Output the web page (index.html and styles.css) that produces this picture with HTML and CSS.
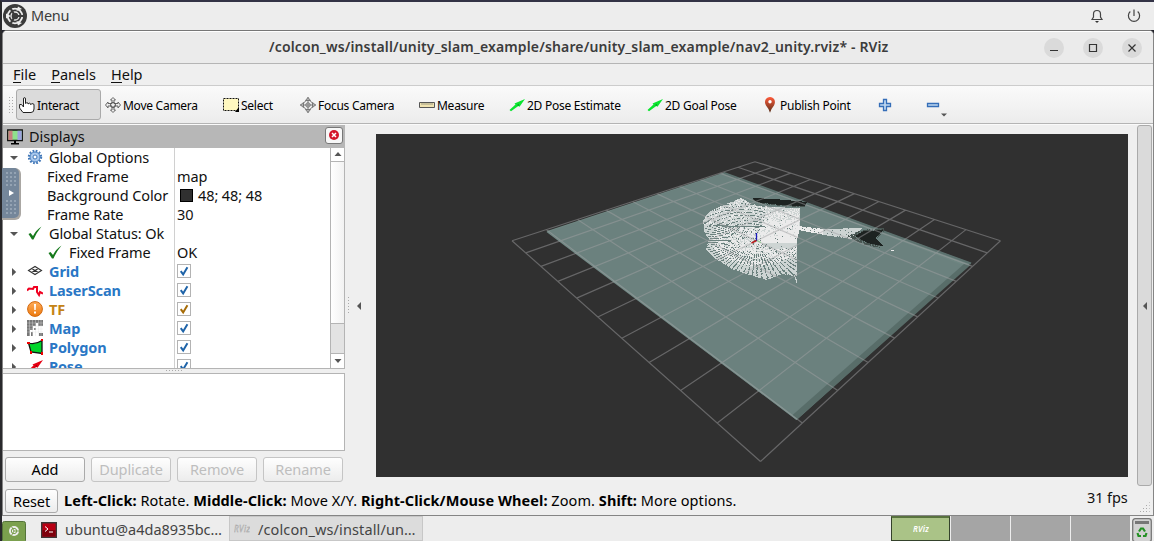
FILE: index.html
```html
<!DOCTYPE html>
<html lang="en">
<head>
<meta charset="utf-8">
<title>RViz</title>
<link rel="stylesheet" href="styles.css">
</head>
<body>
<svg class="defs" width="0" height="0">
  <defs>
    <symbol id="tick" viewBox="0 0 14 14"><path d="M3.2 7.2 6 11 11 2.5" fill="none" stroke="currentColor" stroke-width="2.300"/></symbol>
    <symbol id="ok" viewBox="0 0 16 16"><path d="M1.500 9 3.500 8 6 11 Q9 5 14.500 1.500 Q9.500 7.500 6.500 14.500 L5 14.500Z" fill="#177a1d"/></symbol>
    <symbol id="right" viewBox="0 0 8 8"><path d="M2 0 6.200 4 2 8Z" fill="#555"/></symbol>
    <symbol id="down" viewBox="0 0 8 8"><path d="M0 2H8L4 6Z" fill="#555"/></symbol>
    <symbol id="pose" viewBox="0 0 16 16"><path d="M.5 13 6.500 7.500 5.500 6.500 16 2 10.500 9.800 9.300 9 2 14.300Z" fill="currentColor"/><path d="M8 8 10 7 9.500 9Z" fill="#0006"/></symbol>
    <linearGradient id="pin" x2="0" y2="1"><stop offset="0" stop-color="#ff5a3a"/><stop offset="1" stop-color="#56301a"/></linearGradient>
    <linearGradient id="orange" x2="0" y2="1"><stop offset="0" stop-color="#ffad5a"/><stop offset="1" stop-color="#ed7a0f"/></linearGradient>
  </defs>
</svg>
<div class="desktop">
  <header class="panel">
    <svg class="logo" viewBox="0 0 24 24"><circle cx="12" cy="12" r="12" fill="#3b3b3b"/><circle cx="12" cy="12" r="7.300" fill="none" stroke="#eee" stroke-width="1.800"/><circle cx="12" cy="12" r="4" fill="none" stroke="#eee" stroke-width="1.300"/><path d="M12 12 21 12M12 12 7.500 4.200M12 12 7.500 19.800" stroke="#3b3b3b" stroke-width="2.200"/><path d="M3 9.500 8 12 3 14.500ZM13.500 7 15 2.500 19 5ZM13.500 17 15 21.500 19 19Z" fill="#eee"/></svg>
    <span class="grow">Menu</span>
    <svg class="tray" viewBox="0 0 16 16"><path d="M3 11.500 4.500 9V6Q4.500 2.500 8 2.500T11.500 6V9L13 11.500Z" fill="none" stroke="#444" stroke-width="1.200"/><path d="M6 13H10L8 15Z" fill="#333"/></svg>
    <svg class="tray power" viewBox="0 0 16 16"><path d="M4.300 3.500A5.600 5.600 0 1 0 11.700 3.500M8 1.500V8" fill="none" stroke="#444" stroke-width="1.200"/></svg>
  </header>
  <main class="window">
    <div class="title"><b>/colcon_ws/install/unity_slam_example/share/unity_slam_example/nav2_unity.rviz* - RViz</b>
      <div class="controls">
        <svg viewBox="0 0 20 20"><circle cx="10" cy="10" r="10"/><path d="M6 12.500H14"/></svg>
        <svg viewBox="0 0 20 20"><circle cx="10" cy="10" r="10"/><path d="M6.500 6.500H13.500V13.500H6.500Z"/></svg>
        <svg viewBox="0 0 20 20"><circle cx="10" cy="10" r="10"/><path d="M6.500 6.500 13.500 13.500M13.500 6.500 6.500 13.500"/></svg>
      </div>
    </div>
    <nav class="menu"><span><u>F</u>ile</span><span><u>P</u>anels</span><span><u>H</u>elp</span></nav>
    <div class="toolbar">
      <i class="grip"></i>
      <div class="tool active"><svg viewBox="0 0 16 16"><path d="M4.500 10V2Q4.500.6 5.500.6T6.500 2V6.500Q9 4.500 9 7 11.500 5 11.500 7.500 14.800 5.500 15 8V12Q15 15.500 12 15.500H4L.6 11V7.500H2.500L4.500 10" fill="#fff" stroke="#222"/></svg><span>Interact</span></div>
      <div class="tool"><svg viewBox="0 0 16 16"><path d="M8 .5 10.500 3H9V6.500H13V5L15.500 8 13 11V9H9V13H10.500L8 15.500 5.500 13H7V9H3V11L.5 8 3 5V6.500H7V3H5.500Z" fill="#eee" stroke="#666"/><circle cx="8" cy="8" r="2.500" fill="none" stroke="#555"/></svg><span>Move Camera</span></div>
      <div class="tool"><svg viewBox="0 0 16 16"><path d="M.5 1.500H15.500V13.500H.5Z" fill="#fff8c0" stroke="#111" stroke-dasharray="2 1"/><path d="M16 10V15H12Z"/></svg><span>Select</span></div>
      <div class="tool"><svg viewBox="0 0 16 16"><path d="M8 0V16M0 8H16M8 .5 5.500 3.500 10.500 3.500ZM8 15.500 5.500 12.500H10.500ZM.5 8 3.500 5.500V10.500ZM15.500 8 12.500 5.500V10.500Z" fill="none" stroke="#777"/><circle cx="8" cy="8" r="4.700" fill="none" stroke="#777"/><circle cx="8" cy="8" r="2.200" fill="none" stroke="#777"/></svg><span>Focus Camera</span></div>
      <div class="tool"><svg viewBox="0 0 16 16"><path d="M.5 5.500H15.500V10.500H.5Z" fill="#f0e3b0" stroke="#555"/><path d="M3 6V8M5 6V8M7 6V8M9 6V8M11 6V8M13 6V8" stroke="#887" stroke-width=".8"/></svg><span>Measure</span></div>
      <div class="tool green"><svg><use href="#pose"/></svg><span>2D Pose Estimate</span></div>
      <div class="tool green"><svg><use href="#pose"/></svg><span>2D Goal Pose</span></div>
      <div class="tool"><svg viewBox="0 0 16 16"><path d="M8 15.800Q7 12 4 8.500C1.500 4 4.200 0 8 0S14.500 4 12 8.500Q9 12 8 15.800Z" fill="url(#pin)"/><circle cx="8" cy="4.800" r="1.700" fill="#fff"/></svg><span>Publish Point</span></div>
      <div class="tool"><svg viewBox="0 0 16 16"><path d="M6.500 2.500H9.500V6.500H13.500V9.500H9.500V13.500H6.500V9.500H2.500V6.500H6.500Z" fill="#bfd8f0" stroke="#356eb8" stroke-width="1.300"/></svg></div>
      <div class="tool"><svg viewBox="0 0 16 16"><path d="M2.500 6.500H13.500V9.500H2.500Z" fill="#bfd8f0" stroke="#356eb8" stroke-width="1.300"/></svg><svg class="drop"><use href="#down"/></svg></div>
    </div>
    <div class="work">
      <section class="displays">
        <div class="dockhead"><svg viewBox="0 0 16 16"><path d="M.7 1H15.300V11.500H.7Z" fill="#8fe08c" stroke="#111" stroke-width="1.300"/><path d="M1.400 1.700H5.500V11H1.400Z" fill="#c77f80"/><path d="M10.500 1.700H14.700V11H10.500Z" fill="#9da2dd"/><path d="M7 12H9V14H12V15.500H4V14H7Z"/></svg><span>Displays</span><svg class="close" viewBox="0 0 18 17"><rect x=".5" y=".5" width="17" height="16" rx="2.500" fill="#f7f7f7" stroke="#777"/><circle cx="9" cy="8" r="5" fill="#d4152a"/><path d="M7 6 11 10M11 6 7 10" stroke="#fff" stroke-width="1.500"/></svg></div>
        <div class="tree">
          <div class="rows">
            <div class="row"><svg class="arr"><use href="#down"/></svg><svg class="ico" viewBox="0 0 16 16"><circle cx="8" cy="8" r="6" fill="none" stroke="#4278b8" stroke-width="2.400" stroke-dasharray="1.700 1.440"/><circle cx="8" cy="8" r="5" fill="#a9c8ec" stroke="#4a80c0"/><circle cx="8" cy="8" r="2" fill="#fff" stroke="#4278b8"/></svg><span>Global Options</span></div>
            <div class="row prop"><span class="name">Fixed Frame</span><span>map</span></div>
            <div class="row prop"><span class="name">Background Color</span><i class="swatch"></i><span>48; 48; 48</span></div>
            <div class="row prop"><span class="name">Frame Rate</span><span>30</span></div>
            <div class="row"><svg class="arr"><use href="#down"/></svg><svg class="ico"><use href="#ok"/></svg><span>Global Status: Ok</span></div>
            <div class="row status"><svg class="ico"><use href="#ok"/></svg><span class="name">Fixed Frame</span><span>OK</span></div>
            <div class="row item"><svg class="arr"><use href="#right"/></svg><svg class="ico" viewBox="0 0 16 16"><path d="M1.500 7.500 8 3.500 14.500 7.500 8 11.500ZM4.700 5.500 11.300 9.500M4.700 9.500 11.300 5.500" fill="none" stroke="#333" stroke-width="1.100"/></svg><b>Grid</b><i class="check"><svg><use href="#tick"/></svg></i></div>
            <div class="row item"><svg class="arr"><use href="#right"/></svg><svg class="ico" viewBox="0 0 16 16"><path d="M0 8.500 2 6.500 6 7 7 5H10V10L12 13 13 10 16 11.500" fill="none" stroke="#f00020" stroke-width="2"/></svg><b>LaserScan</b><i class="check"><svg><use href="#tick"/></svg></i></div>
            <div class="row item warn"><svg class="arr"><use href="#right"/></svg><svg class="ico" viewBox="0 0 16 16"><circle cx="8" cy="8" r="7.400" fill="url(#orange)" stroke="#d2680d"/><path d="M7 3H9L8.700 9H7.300ZM7 10.500H9V12.500H7Z" fill="#fff"/></svg><b>TF</b><i class="check"><svg><use href="#tick"/></svg></i></div>
            <div class="row item"><svg class="arr"><use href="#right"/></svg><svg class="ico" viewBox="0 0 16 16"><path d="M0 0H16V6H11V3H9V6H6V10H3V16H0ZM4 12H6V16H4ZM12 13H16V16H12ZM7 8H9V10H7Z" fill="#777"/><path d="M2.500 0V16M5.500 0V16M8.500 0V16M11.500 0V16M14 0V16M0 3H16M0 6H16M0 9H16M0 12H16" stroke="#ddd" stroke-width=".4"/></svg><b>Map</b><i class="check"><svg><use href="#tick"/></svg></i></div>
            <div class="row item"><svg class="arr"><use href="#right"/></svg><svg class="ico" viewBox="0 0 16 16"><path d="M1.500 4Q8 6 15 1.500L15 14.500 4 13Z" fill="#00d62b" stroke="#111" stroke-width="1.300"/><path d="M0 3H3V5H0ZM14 0H16V2H14ZM3 12H5V15H3ZM14 13H16V16H14Z" fill="#e00"/></svg><b>Polygon</b><i class="check"><svg><use href="#tick"/></svg></i></div>
            <div class="row item"><svg class="arr"><use href="#right"/></svg><svg class="ico red"><use href="#pose"/></svg><b>Pose</b><i class="check"><svg><use href="#tick"/></svg></i></div>
          </div>
          <div class="scroll"><i><svg viewBox="0 0 8 8"><path d="M.5 6H7.500L4 2Z" fill="#555"/></svg></i><i class="thumb"></i><i class="groove"></i><i><svg viewBox="0 0 8 8"><path d="M.5 2H7.500L4 6Z" fill="#555"/></svg></i></div>
        </div>
        <div class="split"><i></i></div>
        <div class="desc"></div>
        <div class="buttons"><button>Add</button><button disabled>Duplicate</button><button disabled>Remove</button><button disabled>Rename</button></div>
      </section>
      <div class="divider"><i></i><svg viewBox="0 0 8 8"><path d="M6 0V8L2 4Z" fill="#555"/></svg></div>
      <svg class="view" id="view" viewBox="376 134 752 343">
        <path d="M724 172.500 971 263 796.500 420 547 231Z" fill="#6f8682"/>
        <path d="M724 173.500 965 266 795 416.500 549 231.500Z" fill="#6b817e"/>
        <path d="M970.500 265 796.500 420 792 415.500 964 264Z" fill="#586d69"/>
        <path d="M724 173 971 263.500" stroke="#5c716e" stroke-width="2"/>
        <path d="M547 231.500 797 419.500" stroke="#738b87" stroke-width="1.500" fill="none"/>
        <g shape-rendering="crispEdges"><path id="mid" fill="#cdd4d3"/><path id="bright" fill="#ebebeb"/><path id="shade" fill="#46534f"/><path id="black" fill="#1d2321"/></g>
        <path id="grid" fill="none" stroke="#a0a0a4" stroke-opacity=".48" stroke-width="1.200"/>
        <path d="M756.500 233V241" stroke="#1919bd" stroke-width="1.300"/><path d="M756.500 240.500 751.500 243" stroke="#b51a1a" stroke-width="1.500"/><path d="M757 240.500 761 242.500" stroke="#8ad08a"/>
      </svg>
      <div class="side"><svg viewBox="0 0 8 8"><path d="M6 0V8L2 4Z" fill="#555"/></svg></div>
    </div>
    <footer class="status-bar"><button>Reset</button><span class="hint"><b>Left-Click:</b> Rotate. <b>Middle-Click:</b> Move X/Y. <b>Right-Click/Mouse Wheel:</b> Zoom. <b>Shift:</b> More options.</span><span class="fps">31 fps</span><i class="resize"></i></footer>
  </main>
  <footer class="tasks">
    <svg class="mate" viewBox="0 0 24 20"><rect x=".5" y=".5" width="23" height="21" rx="2" fill="#7ba04e" stroke="#55743a"/><circle cx="12" cy="10" r="5" fill="#eee"/><circle cx="12" cy="10" r="2.700" fill="none" stroke="#7ba04e"/><path d="M12 10H17M12 10 9.500 5.500M12 10 9.500 14.500" stroke="#7ba04e"/></svg>
    <div class="task"><svg viewBox="0 0 16 16"><rect x=".7" y=".7" width="14.600" height="14.600" fill="#b90014" stroke="#3e3838" stroke-width="1.500"/><path d="M1.500 8H14.500V14.500H1.500Z" fill="#7e000c"/><path d="M4 4.500 7 7 4 9.500M8 10H12" fill="none" stroke="#fff"/></svg><span>ubuntu@a4da8935bc…</span></div>
    <div class="task current"><svg viewBox="0 0 16 16"><text x="0" y="10" class="rv" textLength="16">RViz</text></svg><span>/colcon_ws/install/un…</span></div>
    <div class="spaces"><i class="on"><svg viewBox="0 0 16 16"><text x="0" y="11" class="rv light" textLength="16">RViz</text></svg></i><i></i><i></i><i></i></div>
    <svg class="trash" viewBox="0 0 20 23"><rect x=".7" y=".7" width="18.600" height="23" rx="2.500" fill="#d2d2d2" stroke="#777" stroke-width="1.300"/><path d="M3 3H17V6H3Z" fill="#777"/><g fill="none" stroke="#249024" stroke-width="2.200"><path d="M7 13.500 9 10.500H11L13 13.500M14.500 15 13.500 18H11M9 18H6.500L5.500 15"/></g></svg>
  </footer>
  <aside class="handle"><i></i><svg viewBox="0 0 8 8"><path d="M2 1V7L7 4Z" fill="#fff"/></svg><i></i></aside>
</div>
<script src="scene.js"></script>
</body>
</html>
```
FILE: styles.css
```css
*{box-sizing:border-box}
body{margin:0;width:1154px;height:541px;overflow:hidden;background:#20212a;font:14.5px "Noto Sans",sans-serif;letter-spacing:-.1px;color:#111}
svg{display:block;flex:none}
.defs{position:absolute}
.desktop{height:541px;display:flex;flex-direction:column;border-top:2px solid #333346;border-left:2px solid #29292c;position:relative}
.panel{height:28px;background:#ededed;display:flex;align-items:center;padding:0 12px 0 1px;color:#3c3c3c}
.panel span{padding-bottom:2px;letter-spacing:-.25px}
.logo{width:24px;height:24px;margin-right:4px}
.grow{flex:1}
.tray{width:16px;height:16px}
.power{margin-left:21px}
.window{height:486px;background:#efefef;border:1px solid #858585;border-top:1px solid #777;border-radius:5px 5px 0 0;display:flex;flex-direction:column;overflow:hidden}
.title{height:33px;flex:none;background:#ebebeb;border-top:1px solid #fff;border-bottom:1px solid #b5b5b5;display:flex;align-items:center;color:#3c3c3c;padding-left:266px;font-size:14px;letter-spacing:.145px;white-space:nowrap}
.title b{font-weight:600;width:620px;padding-bottom:2px}
.controls{display:flex;gap:19px;margin-left:155px}
.controls svg{width:20px;height:20px}
.controls circle{fill:#dadada}
.controls path{fill:none;stroke:#333;stroke-width:1.200}
.menu{height:22px;flex:none;border-bottom:1px solid #ccc;display:flex;align-items:center;gap:15px;padding:0 0 2px 10px;letter-spacing:0}
.menu u{display:inline-block;height:17px;line-height:17px;text-decoration:none;border-bottom:1px solid #111}
.toolbar{height:38px;flex:none;border-bottom:1px solid #b4b4b4;background:linear-gradient(#fafafa,#ececec);display:grid;grid-template-columns:13px 85px 118px 77px 119px 90px 138px 115px 115px 48px 30px;align-items:center;font-size:12px;letter-spacing:-.26px;white-space:nowrap;color:#000}
.grip{width:5px;height:17px;margin-left:5px;background:radial-gradient(circle,#aaa .7px,transparent 1px) 0 0/3px 3px}
.tool{height:31px;display:flex;align-items:center;gap:2px;padding-left:3px;border:1px solid transparent}
.tool span{padding-top:1px}
.tool svg{width:16px;height:16px}
.tool.active{width:85px;background:#dbdbdb;border-color:#aaa;border-radius:3px;padding-left:2px}
.green{color:#0be52f}
.green span{color:#000}
.tool .drop{width:6px;height:6px;margin:20px 0 0 -2px}
.work{height:362px;flex:none;display:flex;border-top:1px solid #fafafa}
.displays{width:342px;display:flex;flex-direction:column}
.dockhead{height:23px;background:#b7b7b7;display:flex;align-items:center;padding:0 2px 0 4px;gap:6px}
.dockhead svg{width:16px;height:16px}
.dockhead span{flex:1;padding-bottom:2px}
.dockhead .close{width:18px;height:17px;margin-bottom:3px}
.tree{height:221px;flex:none;display:flex;background:#fff;border-bottom:1px solid #b4b4b4}
.rows{width:327px;overflow:hidden;background:linear-gradient(#d0d0d0,#d0d0d0) 171px 0/1px 100% no-repeat}
.row{height:19px;display:flex;align-items:center;padding-left:7px;white-space:nowrap}
.row span,.row b{line-height:18px;padding-bottom:1px}
.arr{width:8px;height:8px}
.ico{width:16px;height:16px;margin:-2px 6px 0 9px}
.prop{padding-left:44px}
.prop .name{width:130px}
.swatch{width:13px;height:13px;background:#303030;border:1px solid #000;margin:0 5px 0 3px}
.status{padding-left:35px}
.status .name{width:108px}
.item{color:#2a77c5}
.item b{width:127px}
.check{width:14px;height:14px;border:1px solid #b3b3b3;background:#fff;margin:-2px 0 0 1px;color:#1e63a8}
.check svg{width:12px;height:12px}
.item.warn{color:#c48316}
.warn .check{color:#a66b07}
.red{color:#e60012}
.scroll{width:15px;border:1px solid #b4b4b4;border-top:0;border-bottom:0;display:flex;flex-direction:column}
.scroll i{height:14px;border-bottom:1px solid #b4b4b4;display:grid;place-items:center}
.scroll svg{width:8px;height:8px}
.scroll .thumb{height:163px;background:linear-gradient(90deg,#fff,#f2f2f2)}
.scroll .groove{height:30px;background:#e3e3e3}
.scroll i:last-child{border:0}
.split{height:4px;display:grid;justify-items:center;padding-top:1px}
.split i{width:17px;height:1px;background:repeating-linear-gradient(90deg,#aaa 0 1px,transparent 1px 3px)}
.desc{height:78px;background:#fff;border:1px solid #b4b4b4;border-left:0}
.buttons{display:flex;gap:6px;padding:6px 0 0 2px}
button{height:25px;width:80px;padding:0 0 2px;font:inherit;letter-spacing:inherit;color:#000;background:linear-gradient(#fefefe,#ececec);border:1px solid #aaa;border-radius:3px}
button:disabled{color:#bebebe;border-color:#c5c5c5}
.divider{width:31px;display:flex;align-items:center;gap:6px;padding-left:3px}
.divider i{width:1px;height:17px;background:repeating-linear-gradient(#aaa 0 1px,transparent 1px 3px)}
.divider svg,.side svg{width:8px;height:8px}
.view{width:752px;height:343px;background:#303030;margin-top:9px}
.side{width:15px;height:361px;margin-left:9px;background:#dadada;border:1px solid #aaa;border-radius:3px;display:grid;place-items:center}
.status-bar{flex:1;display:flex;align-items:center;padding-left:2px;white-space:nowrap}
.status-bar button{width:53px;height:24px;margin-right:6px;padding-bottom:0}
.hint{width:1023px;padding-bottom:2px;font-size:14.5px;letter-spacing:.07px;color:#000}
.fps{margin-top:-8px}
.resize{width:11px;height:11px;margin:12px 0 0 11px;background:radial-gradient(circle,#aaa .7px,transparent 1px) 0 0/3px 3px;clip-path:polygon(100% 0,100% 100%,0 100%)}
.tasks{height:25px;background:#ededed;display:flex;color:#444}
.mate{width:24px;height:20px;margin-top:5px}
.task{width:203px;display:flex;align-items:center;gap:8px;padding:3px 0 0 15px;white-space:nowrap;letter-spacing:0}
.task svg{width:16px;height:16px}
.task span{padding-bottom:2px}
.task.current{width:194px;padding-left:4px;background:#dcdcdc;border:1px solid #c7c7c7;letter-spacing:.12px}
.rv{font:italic 8px "Noto Sans",sans-serif;letter-spacing:0;fill:#f5f5f5;stroke:#999;stroke-width:.4}
.rv.light{font-weight:600;fill:#fff;stroke:none}
.spaces{display:flex;gap:1px;margin-left:468px}
.spaces i{width:59px;background:#a5a5a5;display:grid;place-items:center}
.spaces .on{background:#aac387;border:1px solid #34422b;border-top:2px solid #59733e}
.spaces svg{width:16px;height:16px}
.trash{width:20px;height:23px;margin:2px 0 0 2px}
.handle{position:absolute;left:0;top:166px;width:17px;height:50px;background:#74869a;border-radius:0 5px 5px 0;box-shadow:1px 1px 0 1px #aaa7a3;display:flex;flex-direction:column;align-items:center;justify-content:center;gap:2px}
.handle i{width:12px;height:16px;background:radial-gradient(circle,#94a3b3 .8px,transparent 1.100px) 0 0/4px 4px}
.handle svg{width:8px;height:8px}
```
FILE: scene.js
```js
// Ground grid: ten cells per side projected onto the view.
const c = [[755, 161.7], [1000.5, 240.7], [760.5, 461.5], [512, 240.7]];
const dx1 = c[1][0] - c[2][0], dx2 = c[3][0] - c[2][0], sx = c[0][0] - c[1][0] + c[2][0] - c[3][0];
const dy1 = c[1][1] - c[2][1], dy2 = c[3][1] - c[2][1], sy = c[0][1] - c[1][1] + c[2][1] - c[3][1];
const det = dx1 * dy2 - dx2 * dy1;
const g = (sx * dy2 - dx2 * sy) / det, h = (dx1 * sy - sx * dy1) / det;
function project(u, v) {
  const w = g * u + h * v + 1;
  return [0, 1].map(k => (((c[1][k] - c[0][k] + g * c[1][k]) * u + (c[3][k] - c[0][k] + h * c[3][k]) * v + c[0][k]) / w).toFixed(2)).join(' ');
}
let d = '';
for (let i = 0; i <= 10; i++) {
  const t = i / 10;
  d += `M${project(t, 0)}L${project(t, 1)}M${project(0, t)}L${project(1, t)}`;
}
document.getElementById('grid').setAttribute('d', d);

// Occupancy cells: free space fans out from the robot.
const inside = (x, y, p) => {
  let r = false;
  for (let i = 0, j = p.length - 1; i < p.length; j = i++) {
    const [a, b] = p[i], [e, f] = p[j];
    if ((b > y) !== (f > y) && x < (e - a) * (y - b) / (f - b) + a) r = !r;
  }
  return r;
};
const noise = (x, y) => { const s = Math.sin(x * 127.1 + y * 311.7) * 43758.5453; return s - Math.floor(s); };
const fan = [[703, 219], [709, 212], [721, 206], [741, 198], [752, 204], [770, 207], [800, 208], [800, 227], [797, 241], [797, 284], [794, 276], [782, 274], [767, 280], [750, 275], [732, 269], [716, 259], [706, 249], [709, 240], [704, 231]];
const core = [[756, 240], [768, 212], [799, 209], [798, 247], [776, 249], [757, 244]];
const beam = [[798, 226], [825, 229], [862, 228], [852, 239], [830, 236], [798, 230]];
const wall = [[750, 199], [756, 198], [775, 200], [806, 203], [805, 207], [790, 207], [762, 204]];
const wallCore = [[753, 198], [775, 199], [807, 202], [805, 206], [780, 205], [756, 202]];
const blob = [[847, 236], [862, 230], [884, 228], [885, 231], [877, 239], [883, 245], [880, 248], [862, 244]];
const blobCore = [[855, 236], [864, 231], [884, 230], [876, 238], [883, 246], [868, 243]];
const out = { mid: '', bright: '', shade: '', black: '' };
for (let y = 196; y < 285; y++) for (let x = 700; x < 890; x++) {
  const n = noise(x, y), px = x + .5, py = y + .5;
  let layer = '';
  if (inside(px, py, fan)) {
    const ax = px - 756, ay = (py - 240) * 1.7, r = Math.hypot(ax, ay), a = Math.atan2(ay, ax);
    if (inside(px, py, core)) layer = n < .02 ? '' : (y < 220 ? n > .5 : y < 237 ? n > .15 : y < 243 || x < 762) ? 'bright' : 'mid';
    else if (y < 226) layer = Math.sin(r * 1.35 + ax * .35) + n * 1.1 > -.25 || x > 765 ? (n > .8 ? 'bright' : 'mid') : '';
    else if (r < 24 || (x > 766 && y < 258)) layer = n < .1 ? '' : n > .45 ? 'bright' : 'mid';
    else layer = Math.sin(a * 80) + n * 1.1 > -.05 ? (r < 44 && n > .45 ? 'bright' : 'mid') : '';
    if ((y === 226 && x > 722 && x < 765) || (y === 225 && x < 728 && x > 712)) layer = '';
  }
  if (inside(px, py, beam)) layer = n < .06 ? '' : (x < 823 ? 'bright' : 'mid');
  if (inside(px, py, wall) || inside(px, py, blob)) layer = n > .3 ? 'shade' : layer;
  if (inside(px, py, wallCore) || inside(px, py, blobCore)) layer = 'black';
  if (layer) out[layer] += `M${x} ${y}h1v1h-1z`;
}
out.bright += 'M891 250h3v1h-3z';
for (const k in out) document.getElementById(k).setAttribute('d', out[k]);
```
